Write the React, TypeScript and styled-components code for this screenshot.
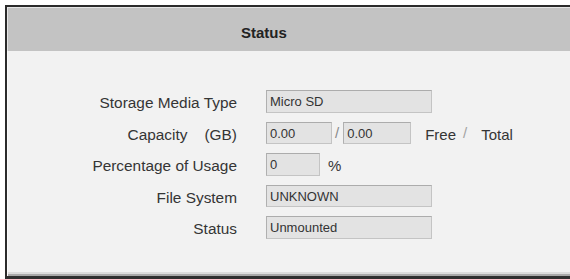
import React from 'react';
import styled, { createGlobalStyle } from 'styled-components';

const GlobalStyle = createGlobalStyle`
  html, body {
    margin: 0;
    padding: 0;
    background: #ffffff;
    font-family: "Liberation Sans", Arial, sans-serif;
    overflow: hidden;
  }
`;

const Frame = styled.div`
  margin: 5px 0 0 5px;
  width: 565px;
  box-sizing: border-box;
  background: #f2f2f2;
  border-left: 2px solid #2b2b2b;
  border-top: 2px solid #2b2b2b;
  border-bottom: 4px solid #2f2f2f;
  box-shadow: inset 1px 1px 0 #fbfbfb, inset 0 -2px 0 #a9a9a9, inset 0 -4px 0 #dcdcdc;
`;

const Header = styled.div`
  height: 44px;
  box-sizing: border-box;
  border-top: 1px solid #e6e6e6;
  border-left: 1px solid #e6e6e6;
  background: #c3c3c3;
  display: flex;
  align-items: center;
  justify-content: flex-start;
  padding: 5px 0 0 233px;
  font-weight: bold;
  font-size: 15px;
  color: #222;
`;

const Content = styled.div`
  display: grid;
  grid-template-columns: 230px auto;
  grid-auto-rows: 22.5px;
  column-gap: 29px;
  row-gap: 9px;
  padding: 39px 0 37px;
`;

const Label = styled.div`
  text-align: right;
  align-self: center;
  padding-top: 4px;
  font-size: 15.4px;
  color: #353535;
  white-space: pre;
`;

const Line = styled.div`
  display: flex;
  align-items: center;
`;

const Field = styled.div<{ $width: number }>`
  width: ${p => p.$width}px;
  height: 22.5px;
  box-sizing: border-box;
  background: #e3e3e3;
  border: 1px solid #c4c4c4;
  border-top-color: #acacac;
  border-left-color: #b0b0b0;
  padding: 3px 0 0 3px;
  font-size: 13px;
  color: #333;
  line-height: 16px;
`;

const Slash = styled.span<{ $light?: boolean }>`
  font-size: 15px;
  color: ${p => (p.$light ? '#a3a3a3' : '#8a8a8a')};
  margin: 0 4px 0 3px;
`;

const Unit = styled.span<{ $left: number }>`
  margin-left: ${p => p.$left}px;
  padding-top: 3px;
  font-size: 15px;
  color: #353535;
`;

export default function App() {
  return (
    <>
      <GlobalStyle />
      <Frame>
        <Header>Status</Header>
        <Content>
          <Label>Storage Media Type</Label>
          <Line>
            <Field $width={166}>Micro SD</Field>
          </Line>

          <Label>{'Capacity    (GB)'}</Label>
          <Line>
            <Field $width={66}>0.00</Field>
            <Slash>/</Slash>
            <Field $width={68}>0.00</Field>
            <Unit $left={14}>Free</Unit>
            <Slash $light style={{ margin: '0 14px 0 7px' }}>/</Slash>
            <Unit $left={0}>Total</Unit>
          </Line>

          <Label>Percentage of Usage</Label>
          <Line>
            <Field $width={54}>0</Field>
            <Unit $left={8}>%</Unit>
          </Line>

          <Label>File System</Label>
          <Line>
            <Field $width={166}>UNKNOWN</Field>
          </Line>

          <Label>Status</Label>
          <Line>
            <Field $width={166}>Unmounted</Field>
          </Line>
        </Content>
      </Frame>
    </>
  );
}
